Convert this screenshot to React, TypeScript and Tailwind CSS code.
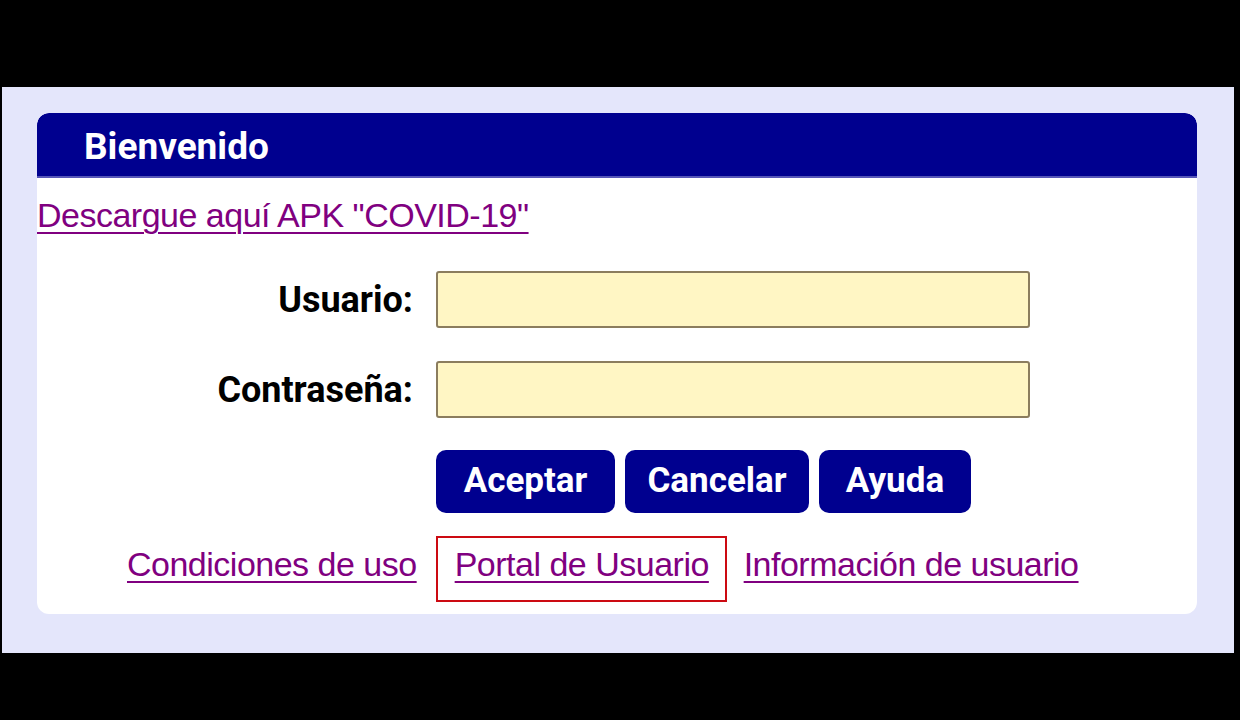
import React from "react";

const linkCls =
  "text-[#800080] underline decoration-[2px] underline-offset-[5px] font-['Liberation_Sans',Arial,sans-serif] text-[34px] tracking-[-0.5px] leading-none whitespace-nowrap";

const btnCls =
  "h-[63px] rounded-[10px] bg-[#00008f] text-white font-['Roboto',Tahoma,sans-serif] font-bold text-[35px] flex items-center justify-center";

const labelCls =
  "font-['Roboto',Tahoma,sans-serif] font-bold text-[36px] text-black text-right whitespace-nowrap";

const inputCls =
  "w-[594px] h-[57px] bg-[#fff6c4] border-2 border-[#8b7d5e] rounded-[3px] outline-none";

const App: React.FC = () => {
  return (
    <div className="w-[1240px] h-[720px] bg-black flex flex-col overflow-hidden">
      <div className="h-[87px] shrink-0" />
      <div className="ml-[2px] w-[1232px] h-[566px] bg-[#e4e6fb] pt-[26px] pl-[35px]">
        <div className="w-[1160px] h-[501px] bg-white rounded-[12px] flex flex-col overflow-hidden">
          <div className="h-[65px] bg-[#00008f] rounded-t-[12px] flex items-center pl-[47px] border-b-2 border-[#5656b8]">
            <span className="text-white font-['Roboto',Tahoma,sans-serif] font-bold text-[37px] leading-none mt-[4px]">
              Bienvenido
            </span>
          </div>

          <div className="pt-[20px]">
            <a href="#" className={linkCls}>
              Descargue aquí APK "COVID-19"
            </a>
          </div>

          <div className="mt-[38px] flex flex-col gap-[33px]">
            <div className="flex items-center">
              <div className={`w-[376px] ${labelCls}`}>Usuario:</div>
              <div className="w-[23px]" />
              <input className={inputCls} />
            </div>
            <div className="flex items-center">
              <div className={`w-[376px] ${labelCls}`}>Contraseña:</div>
              <div className="w-[23px]" />
              <input type="password" className={inputCls} />
            </div>
          </div>

          <div className="mt-[32px] pl-[399px] flex gap-[10px]">
            <button className={`w-[179px] ${btnCls}`}>Aceptar</button>
            <button className={`w-[184px] ${btnCls}`}>Cancelar</button>
            <button className={`w-[152px] ${btnCls}`}>Ayuda</button>
          </div>

          <div className="mt-[23px] pl-[90px] flex items-start">
            <a href="#" className={`mt-[11px] ${linkCls}`}>
              Condiciones de uso
            </a>
            <div className="ml-[19px] h-[66px] w-[291px] border-2 border-[#cc0a12] pt-[9px] pl-[17px]">
              <a href="#" className={linkCls}>
                Portal de Usuario
              </a>
            </div>
            <a href="#" className={`ml-[17px] mt-[11px] ${linkCls}`}>
              Información de usuario
            </a>
          </div>
        </div>
      </div>
    </div>
  );
};

export default App;
